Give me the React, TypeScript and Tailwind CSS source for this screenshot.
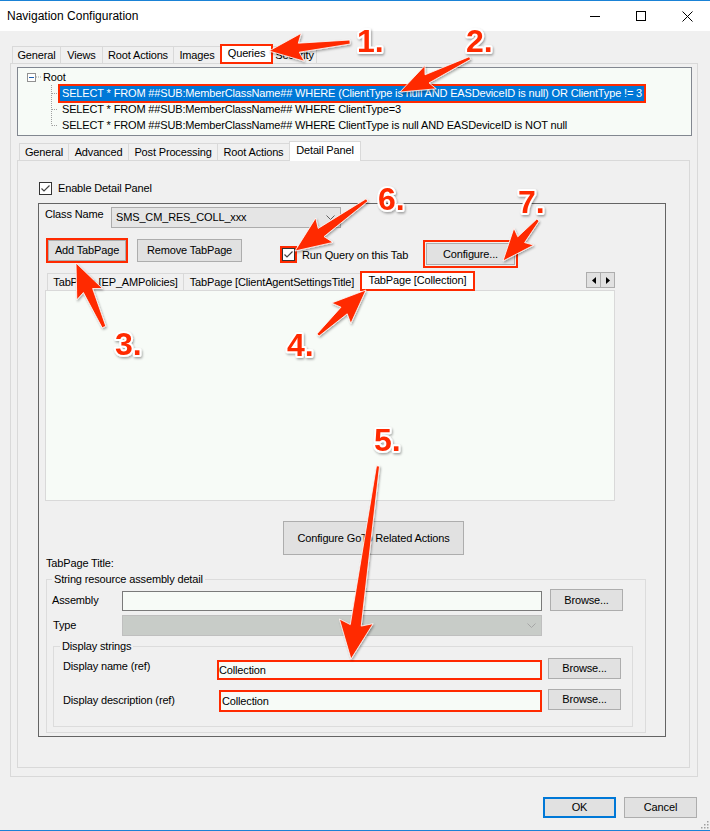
import type { ReactNode } from "react";

const RED = "#ff2a00";

type TabProps = {
  label: string;
  className: string;
  selected?: boolean;
  boxed?: boolean;
};

const Tab = ({ label, className, selected, boxed }: TabProps) => {
  if (selected) {
    return (
      <div
        className={`${className} relative z-10 -mb-px -ml-px flex h-[20px] items-start justify-center whitespace-nowrap border border-b-0 border-[#d9d9d9] bg-white pt-[2px] ${
          boxed ? "outline-2 -outline-offset-2 outline-[#ff2a00]" : ""
        }`}
      >
        {label}
      </div>
    );
  }
  return (
    <div
      className={`${className} -ml-px flex h-[17px] items-center justify-center whitespace-nowrap border border-b-0 border-[#d9d9d9] bg-[#f0f0f0]`}
    >
      {label}
    </div>
  );
};

const Btn = ({ children, className }: { children: ReactNode; className: string }) => (
  <div className={`flex shrink-0 items-center justify-center border border-[#adadad] bg-[#e1e1e1] ${className}`}>
    {children}
  </div>
);

const Check = ({ className = "" }: { className?: string }) => (
  <div className={`flex h-[13px] w-[13px] shrink-0 items-center justify-center border border-[#333333] bg-white ${className}`}>
    <svg width="11" height="11" viewBox="0 0 11 11">
      <path d="M1.5 5.5 L4 8 L9.5 2.5" fill="none" stroke="#444" strokeWidth="1.2" />
    </svg>
  </div>
);

const Chevron = ({ color }: { color: string }) => (
  <svg width="9" height="5" viewBox="0 0 9 5">
    <path d="M0.5 0.5 L4.5 4.5 L8.5 0.5" fill="none" stroke={color} strokeWidth="1" />
  </svg>
);

// tapered annotation arrow, computed from tail and tip
const arrowPoints = (
  x1: number,
  y1: number,
  x2: number,
  y2: number,
  head: number,
  wing: number,
  tailW: number,
  neckW: number,
) => {
  const dx = x2 - x1;
  const dy = y2 - y1;
  const len = Math.hypot(dx, dy);
  const ux = dx / len;
  const uy = dy / len;
  const nx = -uy;
  const ny = ux;
  const bx = x2 - ux * head;
  const by = y2 - uy * head;
  const wx = bx - ux * 4;
  const wy = by - uy * 4;
  const pts = [
    [x1 + (nx * tailW) / 2, y1 + (ny * tailW) / 2],
    [bx + (nx * neckW) / 2, by + (ny * neckW) / 2],
    [wx + (nx * wing) / 2, wy + (ny * wing) / 2],
    [x2, y2],
    [wx - (nx * wing) / 2, wy - (ny * wing) / 2],
    [bx - (nx * neckW) / 2, by - (ny * neckW) / 2],
    [x1 - (nx * tailW) / 2, y1 - (ny * tailW) / 2],
  ];
  return pts.map((p) => `${p[0].toFixed(1)},${p[1].toFixed(1)}`).join(" ");
};

const arrows = [
  [350, 41, 269, 50, 30, 28, 4, 9],
  [470, 57, 400, 91, 30, 26, 3, 9],
  [104, 326, 76, 262, 30, 28, 4, 10],
  [318, 334, 366, 289, 30, 28, 3, 9],
  [378, 465, 351, 658, 34, 34, 3, 11],
  [367, 199, 295, 250, 32, 30, 3, 10],
  [538, 219, 503, 260, 28, 26, 3, 9],
];

const labels = [
  { t: "1.", x: 357, y: 51 },
  { t: "2.", x: 466, y: 51 },
  { t: "3.", x: 115, y: 354 },
  { t: "4.", x: 287, y: 355 },
  { t: "5.", x: 374, y: 450 },
  { t: "6.", x: 378, y: 209 },
  { t: "7.", x: 518, y: 212 },
];

const Annotations = () => (
  <svg className="pointer-events-none absolute left-0 top-0 z-50" width="710" height="831" viewBox="0 0 710 831">
    <defs>
      <filter id="sh" x="-20%" y="-20%" width="140%" height="140%">
        <feDropShadow dx="1" dy="1.5" stdDeviation="1.2" floodColor="#000" floodOpacity="0.35" />
      </filter>
    </defs>
    {arrows.map((a, i) => (
      <polygon
        key={i}
        points={arrowPoints(a[0], a[1], a[2], a[3], a[4], a[5], a[6], a[7])}
        fill={RED}
        stroke="#ffffff"
        strokeWidth="0.8"
        strokeLinejoin="round"
        filter="url(#sh)"
      />
    ))}
    {labels.map((l) => (
      <text
        key={l.t}
        x={l.x}
        y={l.y}
        fontFamily="'Liberation Sans', Arial, sans-serif"
        fontWeight="bold"
        fontSize="32"
        fill={RED}
        stroke="#ffffff"
        strokeWidth="4"
        strokeLinejoin="round"
        paintOrder="stroke"
        filter="url(#sh)"
      >
        {l.t}
      </text>
    ))}
  </svg>
);

const TreeLine = ({ last }: { last?: boolean }) => (
  <svg width="40" height="16" viewBox="0 0 40 16" className="shrink-0">
    <line x1="33.5" y1="0" x2="33.5" y2={last ? 8.5 : 16} stroke="#a0a0a0" strokeDasharray="1 1" />
    <line x1="34" y1="8.5" x2="40" y2="8.5" stroke="#a0a0a0" strokeDasharray="1 1" />
  </svg>
);

const App = () => {
  return (
    <div className="relative h-[831px] w-[710px] overflow-hidden border-y border-[#1a82d6] bg-[#f0f0f0] font-['Liberation_Sans',Arial,sans-serif] text-[11px] leading-[13px] tracking-[-0.15px] text-black">
      {/* title bar */}
      <div className="flex h-[30px] items-center bg-white">
        <span className="pl-[7px] text-[12px] tracking-normal">Navigation Configuration</span>
        <div className="ml-auto flex h-full">
          <div className="flex w-[46px] items-center justify-center">
            <svg width="10" height="10" viewBox="0 0 10 10">
              <line x1="0" y1="5.5" x2="10" y2="5.5" stroke="#000" />
            </svg>
          </div>
          <div className="flex w-[46px] items-center justify-center">
            <svg width="10" height="10" viewBox="0 0 10 10">
              <rect x="0.5" y="0.5" width="9" height="9" fill="none" stroke="#000" />
            </svg>
          </div>
          <div className="flex w-[46px] items-center justify-center">
            <svg width="11" height="11" viewBox="0 0 11 11">
              <path d="M0.5 0.5 L10.5 10.5 M10.5 0.5 L0.5 10.5" stroke="#000" strokeWidth="1" />
            </svg>
          </div>
        </div>
      </div>

      <div className="pt-[13px]">
        {/* outer tab control */}
        <div className="ml-[10px] w-[688px]">
          <div className="flex h-[19px] items-end pl-[3px]">
            <Tab label="General" className="w-[49px]" />
            <Tab label="Views" className="w-[43px]" />
            <Tab label="Root Actions" className="w-[72px]" />
            <Tab label="Images" className="w-[48px]" />
            <Tab label="Queries" className="w-[53px]" selected boxed />
            <Tab label="Security" className="w-[45px]" />
          </div>
          <div className="h-[714px] border border-[#d9d9d9] px-[6px] pt-[3px]">
            {/* tree */}
            <div className="h-[69px] w-[675px] border border-[#828790] bg-[#f7fbf7] pt-px">
              <div className="flex h-[16px] items-center">
                <div className="ml-[9px] flex h-[9px] w-[9px] shrink-0 items-center justify-center border border-[#919191] bg-white">
                  <div className="h-px w-[5px] bg-[#1c5fb0]" />
                </div>
                <svg width="6" height="2" viewBox="0 0 6 2" className="shrink-0">
                  <line x1="0" y1="1" x2="6" y2="1" stroke="#a0a0a0" strokeDasharray="1 1" />
                </svg>
                <span className="ml-[1px]">Root</span>
              </div>
              <div className="flex h-[16px] items-center">
                <TreeLine />
                <span className="ml-[2px] inline-block h-[15px] whitespace-nowrap bg-[#0078d7] px-[2px] leading-[15px] text-white outline-2 outline-[#ff2a00]">
                  SELECT * FROM ##SUB:MemberClassName## WHERE (ClientType is null AND EASDeviceID is null) OR ClientType != 3
                </span>
              </div>
              <div className="flex h-[16px] items-center">
                <TreeLine />
                <span className="ml-[4px] whitespace-nowrap">SELECT * FROM ##SUB:MemberClassName## WHERE ClientType=3</span>
              </div>
              <div className="flex h-[16px] items-center">
                <TreeLine last />
                <span className="ml-[4px] whitespace-nowrap">
                  SELECT * FROM ##SUB:MemberClassName## WHERE ClientType is null AND EASDeviceID is NOT null
                </span>
              </div>
            </div>

            {/* inner tab control */}
            <div className="mt-[5px] w-[673px]">
              <div className="flex h-[19px] items-end pl-[3px]">
                <Tab label="General" className="w-[50px]" />
                <Tab label="Advanced" className="w-[61px]" />
                <Tab label="Post Processing" className="w-[90px]" />
                <Tab label="Root Actions" className="w-[73px]" />
                <Tab label="Detail Panel" className="w-[72px]" selected />
              </div>
              <div className="h-[608px] border border-[#d9d9d9] pl-[20px] pt-[21px]">
                <div className="ml-[1px] flex h-[13px] items-center gap-[6px]">
                  <Check />
                  <span>Enable Detail Panel</span>
                </div>

                {/* detail panel box */}
                <div className="mt-[8px] h-[534px] w-[628px] border border-[#646464]">
                  <div className="flex items-start pl-[6px] pt-[3px]">
                    <span className="mt-[1px] w-[66px] shrink-0">Class Name</span>
                    <div className="flex h-[21px] w-[230px] items-center justify-between border border-[#acacac] bg-[#e5e5e5] pl-[4px] pr-[5px]">
                      <span>SMS_CM_RES_COLL_xxx</span>
                      <Chevron color="#606060" />
                    </div>
                  </div>

                  <div className="mt-[11px] flex h-[26px] items-start pl-[9px]">
                    <Btn className="mt-[1px] h-[21px] w-[78px] outline-2 outline-[#ff2a00]">Add TabPage</Btn>
                    <Btn className="ml-[11px] h-[23px] w-[105px]">Remove TabPage</Btn>
                    <Check className="ml-[40px] mt-[9px] outline-2 outline-[#ff2a00]" />
                    <span className="ml-[7px] mt-[10px] w-[124px] shrink-0 whitespace-nowrap">Run Query on this Tab</span>
                    <Btn className="mt-[4px] h-[22px] w-[89px] outline-2 outline-offset-1 outline-[#ff2a00]">Configure...</Btn>
                  </div>

                  {/* tab pages */}
                  <div className="ml-[6px] mt-[6px] w-[570px]">
                    <div className="flex h-[19px] items-end pl-[3px]">
                      <Tab label="TabPage [EP_AMPolicies]" className="w-[137px]" />
                      <Tab label="TabPage [ClientAgentSettingsTitle]" className="w-[178px]" />
                      <Tab label="TabPage [Collection]" className="w-[115px]" selected boxed />
                      <div className="ml-auto flex self-start pt-[1px]">
                        <div className="flex h-[16px] w-[15px] items-center justify-center border border-[#adadad] bg-[#e1e1e1]">
                          <svg width="4" height="7" viewBox="0 0 4 7">
                            <path d="M4 0 L0 3.5 L4 7 Z" fill="#000" />
                          </svg>
                        </div>
                        <div className="-ml-px flex h-[16px] w-[15px] items-center justify-center border border-[#adadad] bg-[#e1e1e1]">
                          <svg width="4" height="7" viewBox="0 0 4 7">
                            <path d="M0 0 L4 3.5 L0 7 Z" fill="#000" />
                          </svg>
                        </div>
                      </div>
                    </div>
                    <div className="h-[211px] border border-[#d9d9d9] bg-[#f7fbf7]" />
                  </div>

                  <Btn className="ml-[244px] mt-[20px] h-[34px] w-[181px]">Configure GoTo Related Actions</Btn>

                  <div className="mt-[2px] pl-[7px]">TabPage Title:</div>

                  <fieldset className="ml-[7px] mt-[3px] h-[160px] w-[600px] border border-[#dcdcdc]">
                    <legend className="ml-[5px] px-[2px]">String resource assembly detail</legend>
                    <div className="mt-[3px] flex items-start">
                      <span className="mt-[5px] w-[75px] shrink-0 pl-[5px]">Assembly</span>
                      <div className="mt-[2px] h-[20px] w-[420px] border border-[#7a7a7a] bg-[#f7fbf7]" />
                      <Btn className="ml-[8px] h-[22px] w-[73px]">Browse...</Btn>
                    </div>
                    <div className="mt-[4px] flex items-start">
                      <span className="mt-[4px] w-[75px] shrink-0 pl-[6px]">Type</span>
                      <div className="flex h-[21px] w-[420px] items-center justify-end border border-[#bfbfbf] bg-[#c8ccc8] pr-[5px]">
                        <Chevron color="#a6a6a6" />
                      </div>
                    </div>

                    <fieldset className="ml-[6px] mt-[4px] h-[87px] w-[580px] border border-[#dcdcdc]">
                      <legend className="ml-[6px] px-[2px]">Display strings</legend>
                      <div className="mt-[5px] flex items-start">
                        <span className="mt-[2px] w-[163px] shrink-0 pl-[9px]">Display name (ref)</span>
                        <div className="mt-[2px] flex h-[20px] w-[325px] items-center border-2 border-[#ff2a00] bg-[#f7fbf7]">
                          Collection
                        </div>
                        <Btn className="ml-[6px] h-[21px] w-[73px]">Browse...</Btn>
                      </div>
                      <div className="mt-[9px] flex items-start">
                        <span className="mt-[5px] w-[165px] shrink-0 pl-[9px]">Display description (ref)</span>
                        <div className="mt-[1px] flex h-[22px] w-[323px] items-center border-2 border-[#ff2a00] bg-[#f7fbf7] pl-px">
                          Collection
                        </div>
                        <Btn className="ml-[6px] h-[21px] w-[73px]">Browse...</Btn>
                      </div>
                    </fieldset>
                  </fieldset>
                </div>
              </div>
            </div>
          </div>
        </div>

        {/* dialog buttons */}
        <div className="mt-[20px] flex justify-end gap-[8px] pr-[13px]">
          <div className="flex h-[21px] w-[73px] items-center justify-center border-2 border-[#0078d7] bg-[#e1e1e1]">OK</div>
          <Btn className="h-[21px] w-[73px]">Cancel</Btn>
        </div>
      </div>

      {/* size grip */}
      <svg className="absolute bottom-[1px] right-[1px]" width="10" height="10" viewBox="0 0 10 10">
        {[
          [8, 2],
          [8, 5],
          [5, 5],
          [8, 8],
          [5, 8],
          [2, 8],
        ].map((p, i) => (
          <rect key={i} x={p[0]} y={p[1]} width="1.5" height="1.5" fill="#a0a0a0" />
        ))}
      </svg>

      <Annotations />
    </div>
  );
};

export default App;
